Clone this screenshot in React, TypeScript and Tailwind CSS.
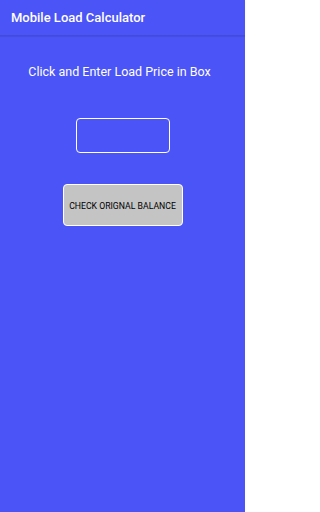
export default function App() {
  return (
    <div
      className="w-[245px] h-[512px] bg-[#4b54f7] flex flex-col"
      style={{ fontFamily: "Roboto, 'Noto Sans', sans-serif" }}
    >
      <div className="h-[36px] flex items-center px-[11px] border-b border-[#424bdc] shadow-[0_1px_1px_rgba(0,0,0,0.08)]">
        <span className="text-white text-[13px] font-medium">Mobile Load Calculator</span>
      </div>
      <div className="flex flex-col items-center">
        <p className="mt-[28px] mr-[6px] text-white text-[12.5px] leading-[16px]">
          Click and Enter Load Price in Box
        </p>
        <input
          type="text"
          className="mt-[38px] w-[94px] h-[35px] border-[1.5px] border-white rounded-[4px] bg-transparent outline-none text-white text-center"
        />
        <button
          type="button"
          className="mt-[31px] w-[120px] h-[42px] pt-[3px] bg-[#c4c4c4] border border-white rounded-[4px] text-black text-[8.7px] leading-none"
        >
          CHECK ORIGNAL BALANCE
        </button>
      </div>
    </div>
  );
}
